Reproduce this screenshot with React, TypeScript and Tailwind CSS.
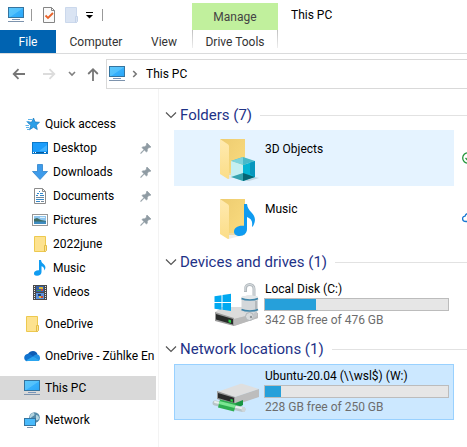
import type { ReactNode } from "react";

function Monitor() {
  return (
    <svg width="16" height="16" viewBox="0 0 16 16" aria-hidden="true" className="shrink-0">
      <defs>
        <linearGradient id="screen" x1="0" y1="0" x2="1" y2="1">
          <stop offset="0" stopColor="#5cc8fb" />
          <stop offset="0.5" stopColor="#53c1fd" />
          <stop offset="0.55" stopColor="#36b0fc" />
          <stop offset="1" stopColor="#2ba6f7" />
        </linearGradient>
      </defs>
      <rect x="0.5" y="0.5" width="15" height="10" fill="url(#screen)" stroke="#35749f" />
      <rect x="4" y="12" width="8" height="1" fill="#7894b8" />
      <rect x="0" y="14" width="16" height="1" fill="#7d93ad" />
    </svg>
  );
}

function FolderSmall() {
  return (
    <svg width="16" height="16" viewBox="0 0 16 16" aria-hidden="true" className="shrink-0">
      <path d="M2.5.5h11v15h-11z" fill="#fde28f" stroke="#edc94f" />
      <path d="M12.5 9.5h2v5l-1 1h-1z" fill="#fde28f" stroke="#e3bc45" />
    </svg>
  );
}

function QuickStar() {
  return (
    <svg width="16" height="16" viewBox="0 0 16 16" aria-hidden="true" className="shrink-0">
      <path d="M9.5 2l1.6 4 4.4.3-3.2 2.9 1 4.3-3.8-2.3-4 2.6 1.3-4.5L3.500 6.500l4.300-.5z" fill="#2b9fe8" stroke="#1478be" strokeWidth="0.7" />
      <path d="M4 3.500h4M2.500 5.500h3M1.500 9.500h3.500M2 11.500h3M3 13.500h2" stroke="#5bb2ea" />
    </svg>
  );
}

function DesktopIcon() {
  return (
    <svg width="16" height="16" viewBox="0 0 16 16" aria-hidden="true" className="shrink-0">
      <rect x="0.5" y="2.5" width="15" height="11" fill="#1c9dfb" stroke="#0c79c9" />
      <path d="M7 11L15 5v6z" fill="#42b3ff" />
      <path d="M1 12.500h14" stroke="#075b9b" />
      <path d="M1 12.500h1M3 12.500h1M12 12.500h2" stroke="#fff" />
    </svg>
  );
}

function DownloadsIcon() {
  return (
    <svg width="16" height="16" viewBox="0 0 16 16" aria-hidden="true" className="shrink-0">
      <path d="M5.500.5h5v7h5L8 15.500.5 7.500h5z" fill="#3d9bea" stroke="#2d83cc" strokeWidth="0.8" />
    </svg>
  );
}

function DocumentsIcon() {
  return (
    <svg width="16" height="16" viewBox="0 0 16 16" aria-hidden="true" className="shrink-0">
      <path d="M2.500.5h8l3 3v12h-11z" fill="#fff" stroke="#8c8c8c" />
      <path d="M10.500.5v3h3" fill="none" stroke="#8c8c8c" />
      <path d="M5 5.500h2M8 5.500h3M4 7.500h2M8 7.500h4M7 3.500h1M4 11.500h8M4 13.500h4" stroke="#3588c9" />
      <path d="M4 9.500h8M9 13.500h3" stroke="#75899a" />
    </svg>
  );
}

function PicturesIcon() {
  return (
    <svg width="16" height="16" viewBox="0 0 16 16" aria-hidden="true" className="shrink-0">
      <rect x="0.5" y="2.5" width="15" height="11" fill="#fff" stroke="#979797" />
      <rect x="2" y="4" width="12" height="8" fill="#8fc6ee" />
      <path d="M2 7l3-1 4 2 5 1v1H2z" fill="#3f6b63" />
      <rect x="2" y="9.5" width="12" height="2.500" fill="#3f8cc0" />
      <path d="M8 5.500h5" stroke="#dff0fb" />
    </svg>
  );
}

function MusicNote() {
  return (
    <svg width="16" height="16" viewBox="0 0 16 16" aria-hidden="true" className="shrink-0">
      <path d="M7 0h2c.3 2.500 1.500 3.200 3 4.500 2 1.800 1.800 4 .2 6 .3-2.500-.7-3.700-2.700-4.300V12c0 2.200-1.800 3.800-4.500 3.800S2 14.600 2 13.300C2 11.500 4.200 10 7 10.300z" fill="#109cf1" />
    </svg>
  );
}

function VideosIcon() {
  return (
    <svg width="16" height="16" viewBox="0 0 16 16" aria-hidden="true" className="shrink-0">
      <rect x="1" y="1" width="14" height="15" fill="#4a4a4a" />
      <path d="M2.500 2v14M13.500 2v14" stroke="#e8e8e8" strokeDasharray="1 1" />
      <rect x="4" y="2" width="8" height="6" fill="#355fa6" />
      <rect x="4" y="9" width="8" height="6" fill="#5d93dc" />
      <path d="M7 3h4v2H7z" fill="#d9b83a" />
      <path d="M5 6h5v1H5z" fill="#3e9a4a" />
      <path d="M9 5h2v2H9zM9 12h2v2H9z" fill="#c94b35" />
      <path d="M6 10h3v2H6z" fill="#1f3e78" />
      <path d="M7 12h2v2H7z" fill="#e2c044" />
    </svg>
  );
}

function CloudIcon() {
  return (
    <svg width="16" height="16" viewBox="0 0 16 16" aria-hidden="true" className="shrink-0">
      <path d="M4 6c1-2 3-3 5-3 2.300 0 4 1.500 4.500 3.500L10 10z" fill="#0c5cb5" />
      <path d="M.3 10.500C-.2 8 1.500 6 4 5.800c1.300 0 2.200.3 3 .9l4 3-8 3.500C1.500 13 .5 12 .3 10.500z" fill="#1173cf" />
      <path d="M9 8.500c1.500-1.700 2.800-2.200 4.500-2 1.700.4 2.500 2 2.500 3.500s-.5 2.500-1.500 3z" fill="#1e8fe2" />
      <path d="M2 12.600L9 8.500l6.300 3.700c-.6.700-1.300.9-2.300.9H4c-.8 0-1.500-.2-2-.5z" fill="#2ba5ef" />
    </svg>
  );
}

function NetworkIcon() {
  return (
    <svg width="16" height="16" viewBox="0 0 16 16" aria-hidden="true" className="shrink-0">
      <circle cx="10.5" cy="5.500" r="5.300" fill="#568ba9" />
      <path d="M7 2c2-1.500 3.500-1 3.500.5S8 4 7 6 5.500 3.500 7 2zM12 3c2 0 3 1.500 3 3s-1.500 3-3 2z" fill="#b4d4df" />
      <rect x="0.5" y="6.500" width="11" height="7" fill="#49bafb" stroke="#35749f" />
      <path d="M3 15.500h6" stroke="#7d93ad" />
    </svg>
  );
}

function PinIcon() {
  return (
    <svg width="12" height="12" viewBox="0 0 12 12" aria-hidden="true" className="shrink-0">
      <path d="M7 1l4 4-1.200.6-.8-.2-1.700 1.800c.3 1.200 0 2.200-.8 2.900L4.300 8 1 11.500.5 11 4 7.700 1.900 5.500c.8-.8 1.800-1 2.900-.8l1.800-1.600L6.400 2z" fill="#8f9ba3" stroke="#8f9ba3" strokeWidth="0.6" />
    </svg>
  );
}

function Chevron({ className }: { className: string }) {
  return (
    <svg width="12" height="12" viewBox="0 0 12 12" aria-hidden="true" className={className}>
      <path d="M1 3.500l5 5 5-5" fill="none" stroke="currentColor" strokeWidth="1.200" />
    </svg>
  );
}

function LargeFolder({ children }: { children: ReactNode }) {
  return (
    <svg width="48" height="48" viewBox="0 0 48 48" aria-hidden="true" className="shrink-0">
      <defs>
        <linearGradient id="back" x1="0" y1="0" x2="1" y2="1">
          <stop offset="0" stopColor="#edcc70" />
          <stop offset="1" stopColor="#fbdc80" />
        </linearGradient>
        <linearGradient id="flap" x1="0" y1="0" x2="0" y2="1">
          <stop offset="0" stopColor="#ffeab0" />
          <stop offset="1" stopColor="#fbdd88" />
        </linearGradient>
      </defs>
      <path d="M8 5h25v36H16z" fill="url(#back)" />
      <path d="M16 45l17-4v-2H16z" fill="#dfdcd2" opacity="0.5" />
      <path d="M8 5l7.500 5c1 .6 1.500 1.500 1.500 2.500V44c0 1-.7 1.300-1.500.8L8 40z" fill="url(#flap)" />
      {children}
    </svg>
  );
}

function ObjectsFolder() {
  return (
    <LargeFolder>
      <path d="M31 47l12-4 4 1-10 3z" fill="#9db8c4" opacity="0.5" />
      <path d="M31 23l12 4-12 4-12-4z" fill="#48b9c9" />
      <path d="M31 23l-12 4 12 4z" fill="#7dd3dc" />
      <path d="M19 27l12 4v16l-12-4z" fill="#c5eff1" />
      <path d="M43 27l-12 4v16l12-4z" fill="#05b4d3" />
      <path d="M43 27l-5 1.700V40l5 3z" fill="#0896bd" />
      <path d="M19 43l12-4v8z" fill="#35a3af" />
      <path d="M31 39l12 4-12 4z" fill="#066573" />
    </LargeFolder>
  );
}

function MusicFolder() {
  return (
    <LargeFolder>
      <path d="M32 10h3c.4 4 2.200 6 4.500 8.500 4.500 4.700 4.300 9 1.300 14-.2.300-.9.100-.8-.3.800-4.700-.8-7.700-5-9.200v12c0 4-3 7-7.500 7-3.200 0-5.500-1.700-5.500-4.500 0-3.500 4-6.500 10-5.700z" fill="#0f9bf0" />
    </LargeFolder>
  );
}

function LocalDisk() {
  return (
    <svg width="48" height="48" viewBox="0 0 48 48" aria-hidden="true" className="shrink-0">
      <path d="M3 32l7-6h19l17 6v5l-24 8z" fill="#c5c5c5" />
      <path d="M3 31l8-5h18l17 6-24 6z" fill="#dcdcdc" />
      <path d="M22 38l24-6v5l-24 8z" fill="#b9b9b9" />
      <path d="M3 31l19 6v8L3 40z" fill="#9c9c9c" />
      <path d="M4 33l17 5v5.500L4 38.500z" fill="#292b2a" />
      <path d="M16.500 38.500l2.500.7V42l-2.500-.7z" fill="#2bd146" />
      <path d="M2.500 15.300l7-1.100V21h-7zM10.500 14L19 12.700V21h-8.500zM2.500 22h7v6.800l-7-1zM10.500 22H19v8l-8.500-1.200z" fill="#00a9f1" />
      <path d="M33.500 11V8c0-6 8.500-6 8.500 0v7" fill="none" stroke="#b3babf" strokeWidth="3" />
      <path d="M33 10V8c0-5.500 8.500-6 9-1v8" fill="none" stroke="#dfe3e5" />
      <path d="M29.500 16c4-2 13-2 16.500 0v14c-4 3-13 3-16.500 0z" fill="#d3d7da" />
      <path d="M29.500 16c4-2 13-2 16.500 0v2c-4 2-13 2-16.500 0z" fill="#e5e8ea" />
      <path d="M29.500 17.500c4 2 13 2 16.500 0M29.500 28.500c4 2 13 2 16.500 0" fill="none" stroke="#3f85a9" strokeWidth="1.500" />
      <path d="M44 20v8" stroke="#b4b8bb" strokeWidth="2" />
      <circle cx="37.500" cy="35.500" r="4" fill="#d8dbdd" stroke="#b0b4b7" />
      <circle cx="39" cy="36" r="1.200" fill="#909496" />
      <path d="M41 33l4-3v5l-4 3z" fill="#c2c5c8" />
    </svg>
  );
}

function NetworkDrive() {
  return (
    <svg width="48" height="48" viewBox="0 0 48 48" aria-hidden="true" className="shrink-0">
      <path d="M5 24l23-8c1-.3 2-.2 3 0l16 5-24 8z" fill="#dfdfdf" />
      <path d="M23 29l24-8v8l-24 8z" fill="#bdbdbd" />
      <path d="M5 23l18 6v8L5 31z" fill="#999" />
      <path d="M6 25l16 4.700v5L6 30z" fill="#292a2b" />
      <path d="M18.500 31l2.300.6v2.300l-2.300-.6z" fill="#2bd146" />
      <path d="M21 36l10-4v5l-7 4z" fill="#199642" />
      <path d="M3 35l28 6.500" stroke="#b7c5c9" strokeWidth="5" strokeLinecap="round" />
      <path d="M3 34l28 6.500" stroke="#e9eff0" strokeWidth="2" strokeLinecap="round" />
      <path d="M7 35.500l16 4" stroke="#2eae51" strokeWidth="8" />
      <path d="M7 34.500l16 4" stroke="#7be592" strokeWidth="3" />
      <ellipse cx="31.500" cy="41.500" rx="2" ry="2.500" fill="#cfd6d9" />
    </svg>
  );
}

type NavItem = { label: string; icon: ReactNode; child?: boolean; pinned?: boolean; active?: boolean };

const navGroups: NavItem[][] = [
  [
    { label: "Quick access", icon: <QuickStar /> },
    { label: "Desktop", icon: <DesktopIcon />, child: true, pinned: true },
    { label: "Downloads", icon: <DownloadsIcon />, child: true, pinned: true },
    { label: "Documents", icon: <DocumentsIcon />, child: true, pinned: true },
    { label: "Pictures", icon: <PicturesIcon />, child: true, pinned: true },
    { label: "2022june", icon: <FolderSmall />, child: true },
    { label: "Music", icon: <MusicNote />, child: true },
    { label: "Videos", icon: <VideosIcon />, child: true },
  ],
  [{ label: "OneDrive", icon: <FolderSmall /> }],
  [{ label: "OneDrive - Zühlke En", icon: <CloudIcon /> }],
  [{ label: "This PC", icon: <Monitor />, active: true }],
  [{ label: "Network", icon: <NetworkIcon /> }],
];

function NavRow({ item }: { item: NavItem }) {
  return (
    <button
      type="button"
      aria-current={item.active ? "page" : undefined}
      className={`flex h-6 w-full items-center gap-[5px] whitespace-nowrap pr-1 text-left ${item.child ? "pl-8" : "pl-6"} ${item.active ? "bg-[#d9d9d9]" : ""}`}
    >
      {item.icon}
      <span className="flex-1">{item.label}</span>
      {item.pinned && <PinIcon />}
    </button>
  );
}

function Group({ title, children }: { title: string; children: ReactNode }) {
  return (
    <section className="mb-px">
      <h2 className="flex h-[30px] items-center text-[15px] text-[#1e3287]">
        <button type="button" className="flex items-center gap-[3px] whitespace-nowrap">
          <Chevron className="text-[#555]" />
          {title}
        </button>
        <span className="ml-2 h-px flex-1 bg-[#e2e2e2]" />
      </h2>
      <div className="flex flex-col gap-1 pl-[9px]">{children}</div>
    </section>
  );
}

function FolderTile({ name, icon, status, hovered }: { name: string; icon: ReactNode; status: ReactNode; hovered?: boolean }) {
  return (
    <div className="flex items-center gap-2 overflow-hidden">
      <button
        type="button"
        className={`flex h-14 w-[280px] shrink-0 items-start gap-[5px] py-1 pl-[38px] text-left ${hovered ? "bg-[#e5f3ff]" : ""}`}
      >
        {icon}
        <span className="pt-[7px] leading-4">{name}</span>
      </button>
      {status}
    </div>
  );
}

function DriveTile({ name, icon, used, free, selected }: { name: string; icon: ReactNode; used: number; free: string; selected?: boolean }) {
  return (
    <button
      type="button"
      className={`flex h-14 w-[280px] items-start gap-1 border py-[3px] pr-1 pl-[37px] text-left ${selected ? "border-[#99d1ff] bg-[#cce8ff]" : "border-transparent"}`}
    >
      {icon}
      <span className="flex flex-1 flex-col">
        <span className="pl-px leading-4">{name}</span>
        <span role="meter" aria-label={`${name} space used`} aria-valuenow={used} className="mt-px block h-[13px] border border-[#bcbcbc] bg-[#e6e6e6]">
          <span className="block h-full bg-[#26a0da]" style={{ width: `${used}%` }} />
        </span>
        <span className="mt-px pl-px leading-4 text-[#6d6d6d]">{free}</span>
      </span>
    </button>
  );
}

export default function App() {
  return (
    <div className="overflow-hidden bg-white font-[Roboto,'Open_Sans',sans-serif] text-[12px] text-black">
      <header>
        <div className="flex h-[30px] items-center pl-2">
          <div className="flex w-[184px] items-center">
            <Monitor />
            <span className="ml-[7px] h-3 w-px bg-[#999]" />
            <button type="button" aria-label="Properties" className="ml-[11px]">
              <svg width="12" height="16" viewBox="0 0 12 16" aria-hidden="true">
                <path d="M.5.500h8l3 3v12H.5z" fill="#fafafa" stroke="#858585" />
                <path d="M8.500.500v3h3" fill="none" stroke="#858585" />
                <path d="M2.500 8.500L5 11l5-5" fill="none" stroke="#e8622a" strokeWidth="1.800" />
              </svg>
            </button>
            <button type="button" aria-label="New folder" className="ml-2.5">
              <svg width="14" height="16" viewBox="0 0 14 16" aria-hidden="true">
                <path d="M.5.500h11v15H.5z" fill="#dae4f3" stroke="#cbd8ec" />
                <path d="M10.500 9.500h2v5l-1 1h-1z" fill="#dae4f3" stroke="#c5d3e9" />
              </svg>
            </button>
            <button type="button" aria-label="Customize toolbar" className="ml-[7px]">
              <svg width="8" height="8" viewBox="0 0 8 8" aria-hidden="true">
                <path d="M0 1.500h7" stroke="#000" />
                <path d="M0 4h7L3.500 7.500z" fill="#000" />
              </svg>
            </button>
            <span className="ml-2 h-3 w-px bg-[#999]" />
          </div>
          <div className="flex h-[27px] w-[86px] items-center justify-center self-end bg-[#c1f09d] pt-px text-[#444]">Manage</div>
          <h1 className="ml-[13px]">This PC</h1>
        </div>
        <nav aria-label="Ribbon" className="flex h-6 border-b border-[#dadbdc] text-[#333]">
          <button type="button" className="h-[23px] w-14 bg-[#0063b1] text-white">File</button>
          <button type="button" className="h-[23px] w-20">Computer</button>
          <button type="button" className="h-[23px] w-14">View</button>
          <div className="flex h-[18px]">
            <span className="w-px bg-linear-to-b from-[#c0c0c0] to-[#eee]" />
            <button type="button" className="h-[23px] w-[84px]">Drive Tools</button>
            <span className="w-px bg-linear-to-b from-[#c0c0c0] to-[#eee]" />
          </div>
        </nav>
        <div className="flex items-center pt-[5px]">
          <div className="flex w-[106px] shrink-0 items-center pl-3">
            <button type="button" aria-label="Back">
              <svg width="14" height="12" viewBox="0 0 14 12" aria-hidden="true">
                <path d="M13 6H2M6.500 1.200L1.700 6l4.800 4.800" fill="none" stroke="#767676" strokeWidth="1.800" />
              </svg>
            </button>
            <button type="button" aria-label="Forward" className="ml-4">
              <svg width="14" height="12" viewBox="0 0 14 12" aria-hidden="true">
                <path d="M1 6h11M7.500 1.200L12.300 6l-4.800 4.800" fill="none" stroke="#dcdcdc" strokeWidth="1.800" />
              </svg>
            </button>
            <button type="button" aria-label="Recent locations" className="ml-3">
              <svg width="8" height="6" viewBox="0 0 8 6" aria-hidden="true">
                <path d="M1 1l3 3 3-3" fill="none" stroke="#808080" strokeWidth="1.600" />
              </svg>
            </button>
            <button type="button" aria-label="Up" className="ml-[11px]">
              <svg width="12" height="14" viewBox="0 0 12 14" aria-hidden="true">
                <path d="M6 14V2.500M1.200 7L6 2.200 10.800 7" fill="none" stroke="#767676" strokeWidth="1.800" />
              </svg>
            </button>
          </div>
          <div className="flex h-[30px] flex-1 items-center border border-r-0 border-[#d9d9d9] pl-0.5">
            <Monitor />
            <svg width="6" height="8" viewBox="0 0 6 8" aria-hidden="true" className="ml-[7px]">
              <path d="M1.200 1l3 3-3 3" fill="none" stroke="#777" strokeWidth="1.600" />
            </svg>
            <button type="button" className="ml-2">This PC</button>
          </div>
        </div>
      </header>
      <div className="flex">
        <nav aria-label="Folders" className="flex w-[159px] shrink-0 flex-col gap-2 border-r border-[#f3f3f3] pt-[23px] pr-0.5 pb-4">
          {navGroups.map((group) => (
            <div key={group[0].label}>
              {group.map((item) => (
                <NavRow key={item.label} item={item} />
              ))}
            </div>
          ))}
        </nav>
        <main className="min-w-0 flex-1 pt-[11px] pl-1.5">
          <Group title="Folders (7)">
            <FolderTile
              name="3D Objects"
              icon={<ObjectsFolder />}
              hovered
              status={
                <svg width="12" height="12" viewBox="0 0 12 12" aria-hidden="true" className="shrink-0">
                  <circle cx="6" cy="6" r="5.300" fill="none" stroke="#24953a" strokeWidth="1.300" />
                  <path d="M3.500 6l2 2 3.500-4" fill="none" stroke="#24953a" strokeWidth="1.300" />
                </svg>
              }
            />
            <FolderTile
              name="Music"
              icon={<MusicFolder />}
              status={
                <svg width="16" height="12" viewBox="0 0 16 12" aria-hidden="true" className="shrink-0">
                  <path d="M4 9.500C-.5 9.500-.3 4.500 3 4.200 4 .8 9.500.2 11 4c4.500 0 5 5.500 1 5.500z" fill="none" stroke="#1778d2" strokeWidth="1.300" />
                </svg>
              }
            />
          </Group>
          <Group title="Devices and drives (1)">
            <DriveTile name="Local Disk (C:)" icon={<LocalDisk />} used={28} free="342 GB free of 476 GB" />
          </Group>
          <Group title="Network locations (1)">
            <DriveTile name={"Ubuntu-20.04 (\\\\wsl$) (W:)"} icon={<NetworkDrive />} used={9} free="228 GB free of 250 GB" selected />
          </Group>
        </main>
      </div>
    </div>
  );
}
